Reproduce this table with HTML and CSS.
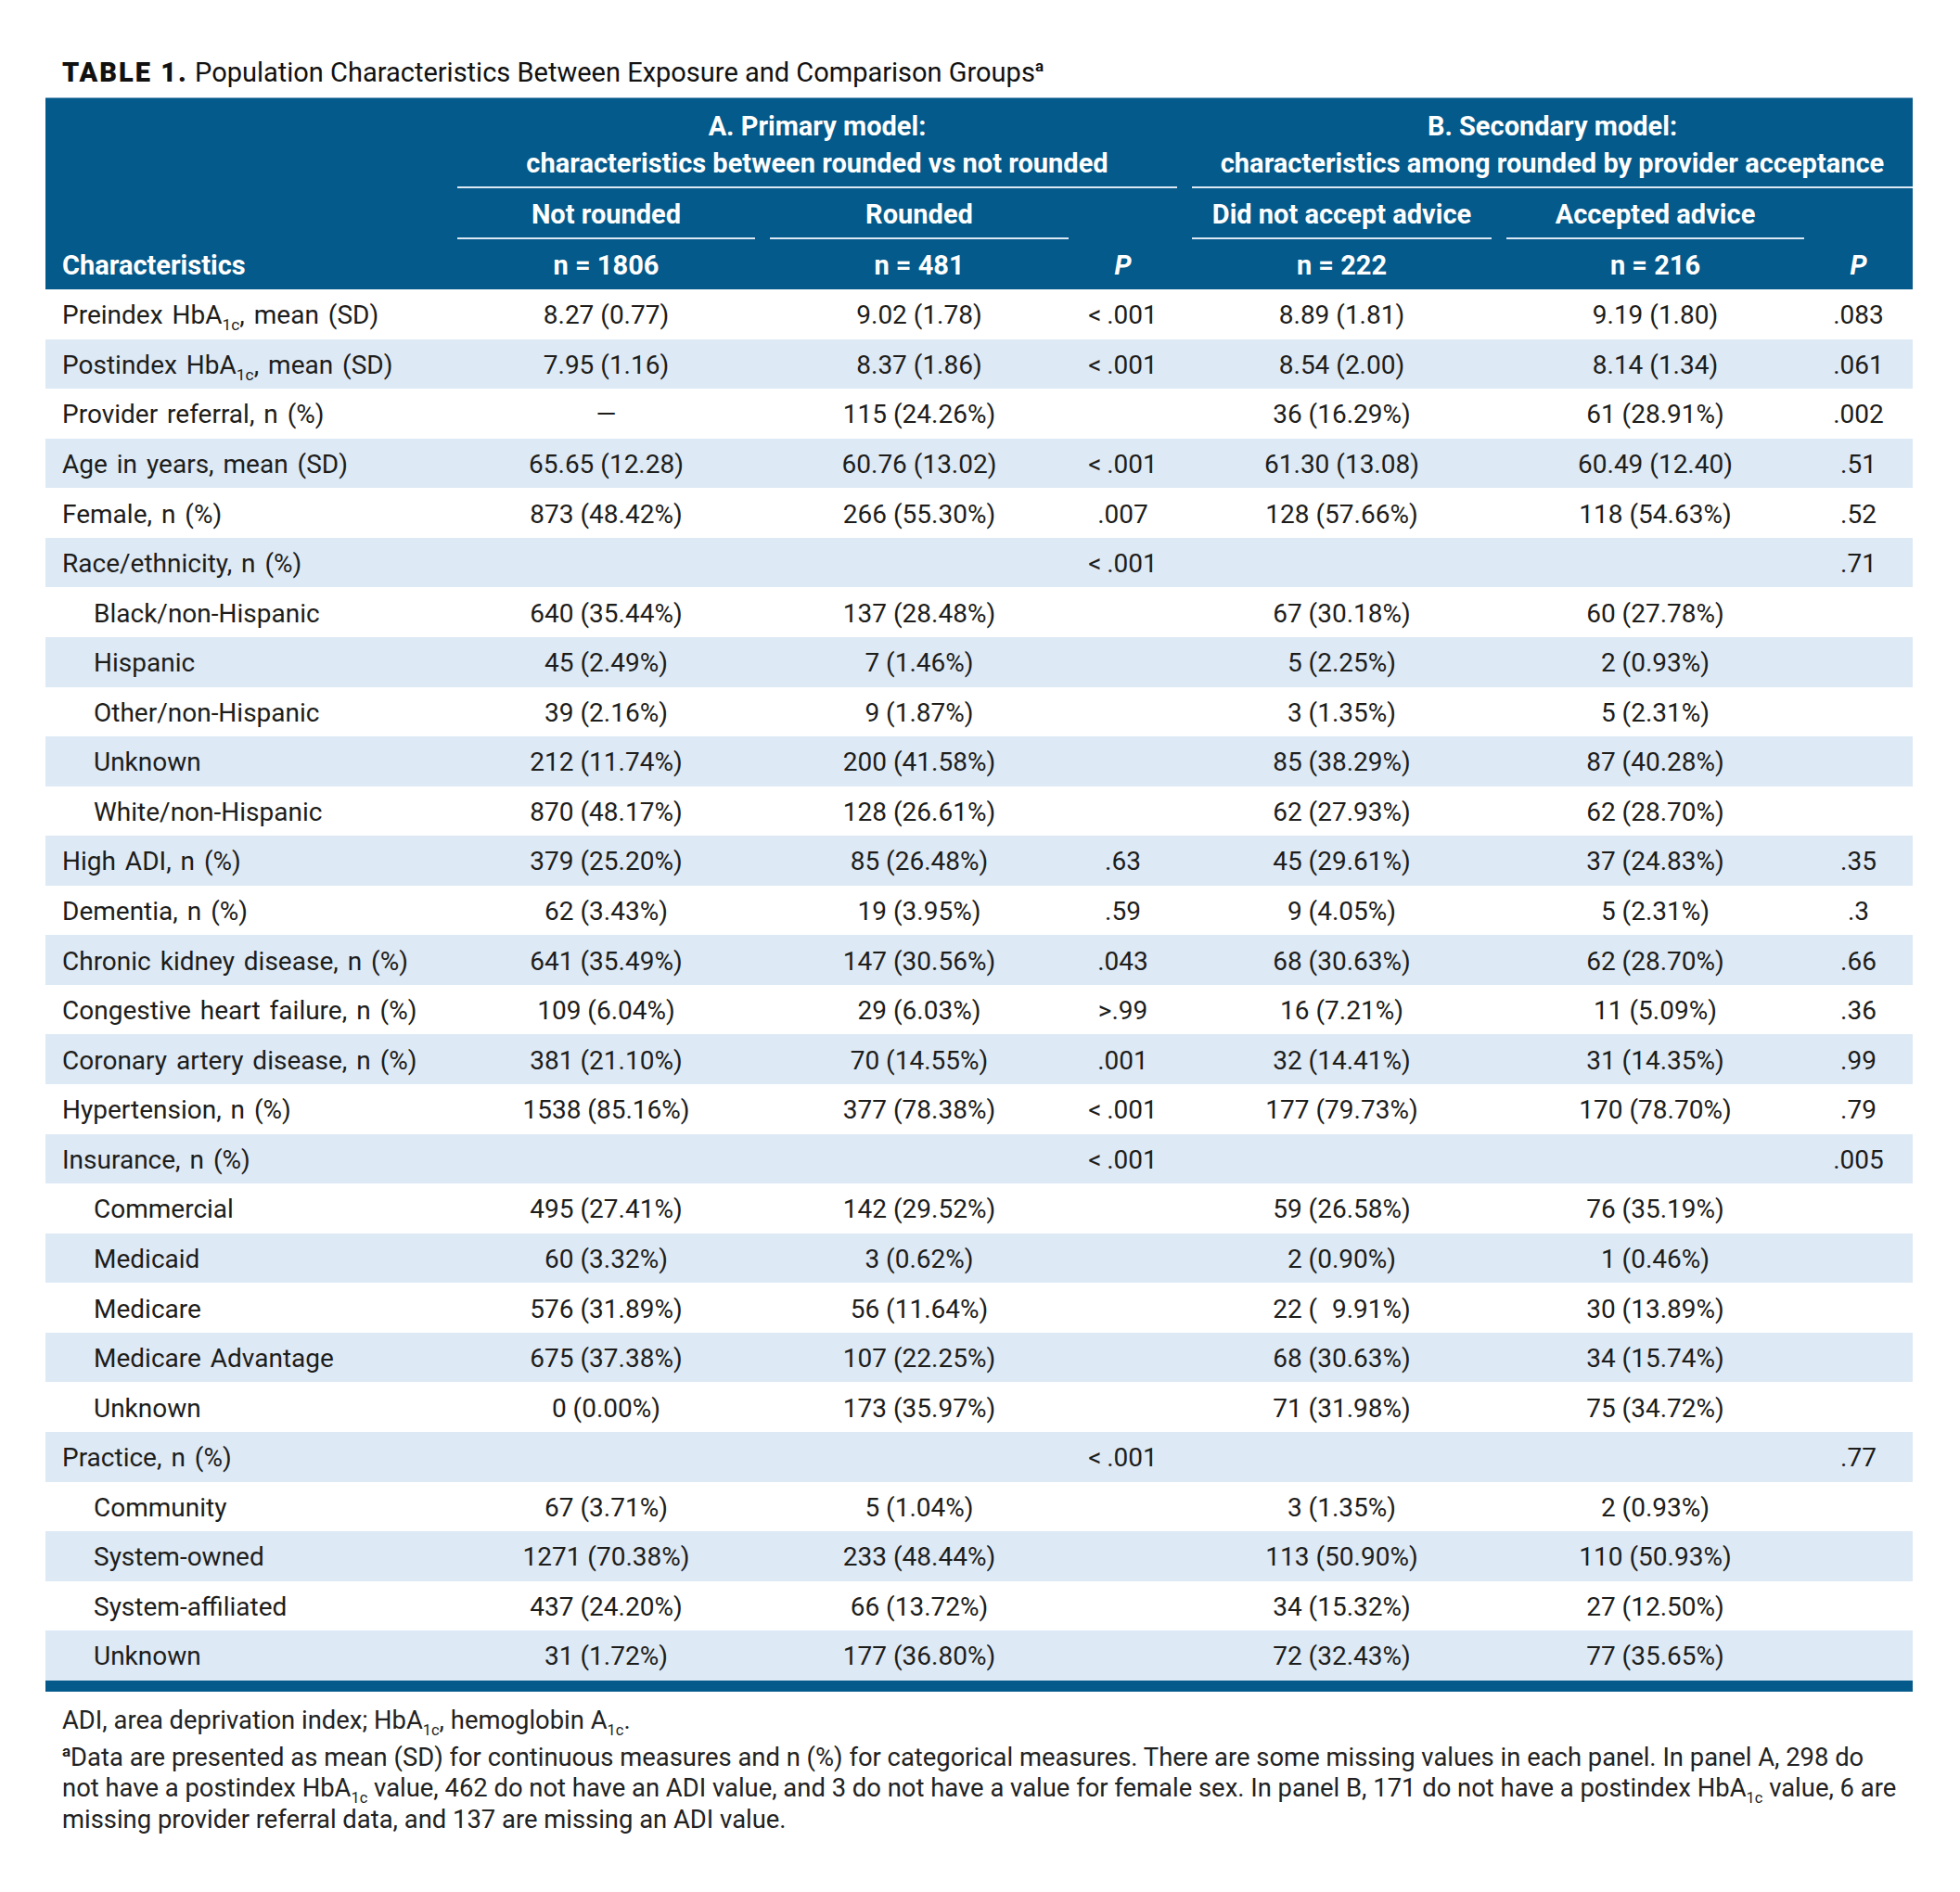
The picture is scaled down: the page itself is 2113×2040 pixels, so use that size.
FILE: index.html
```html
<!DOCTYPE html>
<html lang="en">
<head>
<meta charset="utf-8">
<title>Table 1</title>
<link rel="stylesheet" href="styles.css">
</head>
<body>
<div class="page">
  <h1 class="caption"><span class="cap-label">TABLE 1.</span> Population Characteristics Between Exposure and Comparison Groups<sup class="fn-mark">a</sup></h1>
  <table class="data">
    <colgroup>
      <col class="c0"><col class="c1"><col class="c2"><col class="c3"><col class="c4"><col class="c5"><col class="c6">
    </colgroup>
    <thead>
      <tr class="h-group">
        <th rowspan="2"></th>
        <th colspan="3" class="grp grp-a"><div class="rule">A. Primary model:<br>characteristics between rounded vs not rounded</div></th>
        <th colspan="3" class="grp grp-b"><div class="rule">B. Secondary model:<br>characteristics among rounded by provider acceptance</div></th>
      </tr>
      <tr class="h-sub">
        <th class="sub"><div class="rule">Not rounded</div></th>
        <th class="sub"><div class="rule">Rounded</div></th>
        <th></th>
        <th class="sub"><div class="rule">Did not accept advice</div></th>
        <th class="sub"><div class="rule">Accepted advice</div></th>
        <th></th>
      </tr>
      <tr class="h-n">
        <th class="lbl">Characteristics</th>
        <th>n = 1806</th>
        <th>n = 481</th>
        <th class="p pa"><i>P</i></th>
        <th>n = 222</th>
        <th>n = 216</th>
        <th class="p pb"><i>P</i></th>
      </tr>
    </thead>
    <tbody>
      <tr><td class="lbl">Preindex HbA<sub>1c</sub>, mean (SD)</td><td>8.27 (0.77)</td><td>9.02 (1.78)</td><td class="p pa">&lt;&#8201;.001</td><td>8.89 (1.81)</td><td>9.19 (1.80)</td><td class="p pb">.083</td></tr>
      <tr><td class="lbl">Postindex HbA<sub>1c</sub>, mean (SD)</td><td>7.95 (1.16)</td><td>8.37 (1.86)</td><td class="p pa">&lt;&#8201;.001</td><td>8.54 (2.00)</td><td>8.14 (1.34)</td><td class="p pb">.061</td></tr>
      <tr><td class="lbl">Provider referral, n (%)</td><td>—</td><td>115 (24.26%)</td><td class="p pa"></td><td>36 (16.29%)</td><td>61 (28.91%)</td><td class="p pb">.002</td></tr>
      <tr><td class="lbl">Age in years, mean (SD)</td><td>65.65 (12.28)</td><td>60.76 (13.02)</td><td class="p pa">&lt;&#8201;.001</td><td>61.30 (13.08)</td><td>60.49 (12.40)</td><td class="p pb">.51</td></tr>
      <tr><td class="lbl">Female, n (%)</td><td>873 (48.42%)</td><td>266 (55.30%)</td><td class="p pa">.007</td><td>128 (57.66%)</td><td>118 (54.63%)</td><td class="p pb">.52</td></tr>
      <tr><td class="lbl">Race/ethnicity, n (%)</td><td></td><td></td><td class="p pa">&lt;&#8201;.001</td><td></td><td></td><td class="p pb">.71</td></tr>
      <tr><td class="lbl ind">Black/non-Hispanic</td><td>640 (35.44%)</td><td>137 (28.48%)</td><td class="p pa"></td><td>67 (30.18%)</td><td>60 (27.78%)</td><td class="p pb"></td></tr>
      <tr><td class="lbl ind">Hispanic</td><td>45 (2.49%)</td><td>7 (1.46%)</td><td class="p pa"></td><td>5 (2.25%)</td><td>2 (0.93%)</td><td class="p pb"></td></tr>
      <tr><td class="lbl ind">Other/non-Hispanic</td><td>39 (2.16%)</td><td>9 (1.87%)</td><td class="p pa"></td><td>3 (1.35%)</td><td>5 (2.31%)</td><td class="p pb"></td></tr>
      <tr><td class="lbl ind">Unknown</td><td>212 (11.74%)</td><td>200 (41.58%)</td><td class="p pa"></td><td>85 (38.29%)</td><td>87 (40.28%)</td><td class="p pb"></td></tr>
      <tr><td class="lbl ind">White/non-Hispanic</td><td>870 (48.17%)</td><td>128 (26.61%)</td><td class="p pa"></td><td>62 (27.93%)</td><td>62 (28.70%)</td><td class="p pb"></td></tr>
      <tr><td class="lbl">High ADI, n (%)</td><td>379 (25.20%)</td><td>85 (26.48%)</td><td class="p pa">.63</td><td>45 (29.61%)</td><td>37 (24.83%)</td><td class="p pb">.35</td></tr>
      <tr><td class="lbl">Dementia, n (%)</td><td>62 (3.43%)</td><td>19 (3.95%)</td><td class="p pa">.59</td><td>9 (4.05%)</td><td>5 (2.31%)</td><td class="p pb">.3</td></tr>
      <tr><td class="lbl">Chronic kidney disease, n (%)</td><td>641 (35.49%)</td><td>147 (30.56%)</td><td class="p pa">.043</td><td>68 (30.63%)</td><td>62 (28.70%)</td><td class="p pb">.66</td></tr>
      <tr><td class="lbl">Congestive heart failure, n (%)</td><td>109 (6.04%)</td><td>29 (6.03%)</td><td class="p pa">&gt;.99</td><td>16 (7.21%)</td><td>11 (5.09%)</td><td class="p pb">.36</td></tr>
      <tr><td class="lbl">Coronary artery disease, n (%)</td><td>381 (21.10%)</td><td>70 (14.55%)</td><td class="p pa">.001</td><td>32 (14.41%)</td><td>31 (14.35%)</td><td class="p pb">.99</td></tr>
      <tr><td class="lbl">Hypertension, n (%)</td><td>1538 (85.16%)</td><td>377 (78.38%)</td><td class="p pa">&lt;&#8201;.001</td><td>177 (79.73%)</td><td>170 (78.70%)</td><td class="p pb">.79</td></tr>
      <tr><td class="lbl">Insurance, n (%)</td><td></td><td></td><td class="p pa">&lt;&#8201;.001</td><td></td><td></td><td class="p pb">.005</td></tr>
      <tr><td class="lbl ind">Commercial</td><td>495 (27.41%)</td><td>142 (29.52%)</td><td class="p pa"></td><td>59 (26.58%)</td><td>76 (35.19%)</td><td class="p pb"></td></tr>
      <tr><td class="lbl ind">Medicaid</td><td>60 (3.32%)</td><td>3 (0.62%)</td><td class="p pa"></td><td>2 (0.90%)</td><td>1 (0.46%)</td><td class="p pb"></td></tr>
      <tr><td class="lbl ind">Medicare</td><td>576 (31.89%)</td><td>56 (11.64%)</td><td class="p pa"></td><td>22 (&#8199;9.91%)</td><td>30 (13.89%)</td><td class="p pb"></td></tr>
      <tr><td class="lbl ind">Medicare Advantage</td><td>675 (37.38%)</td><td>107 (22.25%)</td><td class="p pa"></td><td>68 (30.63%)</td><td>34 (15.74%)</td><td class="p pb"></td></tr>
      <tr><td class="lbl ind">Unknown</td><td>0 (0.00%)</td><td>173 (35.97%)</td><td class="p pa"></td><td>71 (31.98%)</td><td>75 (34.72%)</td><td class="p pb"></td></tr>
      <tr><td class="lbl">Practice, n (%)</td><td></td><td></td><td class="p pa">&lt;&#8201;.001</td><td></td><td></td><td class="p pb">.77</td></tr>
      <tr><td class="lbl ind">Community</td><td>67 (3.71%)</td><td>5 (1.04%)</td><td class="p pa"></td><td>3 (1.35%)</td><td>2 (0.93%)</td><td class="p pb"></td></tr>
      <tr><td class="lbl ind">System-owned</td><td>1271 (70.38%)</td><td>233 (48.44%)</td><td class="p pa"></td><td>113 (50.90%)</td><td>110 (50.93%)</td><td class="p pb"></td></tr>
      <tr><td class="lbl ind">System-affiliated</td><td>437 (24.20%)</td><td>66 (13.72%)</td><td class="p pa"></td><td>34 (15.32%)</td><td>27 (12.50%)</td><td class="p pb"></td></tr>
      <tr><td class="lbl ind">Unknown</td><td>31 (1.72%)</td><td>177 (36.80%)</td><td class="p pa"></td><td>72 (32.43%)</td><td>77 (35.65%)</td><td class="p pb"></td></tr>
    </tbody>
  </table>
  <div class="bar"></div>
  <div class="notes">
    <p class="abbr">ADI, area deprivation index; HbA<sub>1c</sub>, hemoglobin A<sub>1c</sub>.</p>
    <p class="fn"><sup class="fn-a">a</sup>Data are presented as mean (SD) for continuous measures and n (%) for categorical measures. There are some missing values in each panel. In panel A, 298 do<br>not have a postindex HbA<sub>1c</sub> value, 462 do not have an ADI value, and 3 do not have a value for female sex. In panel B, 171 do not have a postindex HbA<sub>1c</sub> value, 6 are<br>missing provider referral data, and 137 are missing an ADI value.</p>
  </div>
</div>
</body>
</html>
```
FILE: styles.css
```css
html, body {
  margin: 0;
  padding: 0;
  background: #ffffff;
}

.page {
  padding: 58px 0 0 49px;
  width: 2013px;
  font-family: Roboto, "Liberation Sans", sans-serif;
  color: #1d1d1b;
}

.caption {
  margin: 0 0 7px 0;
  padding-left: 18px;
  font-size: 29px;
  line-height: 40px;
  font-weight: 400;
  color: #111111;
}

.cap-label {
  font-weight: 900;
  letter-spacing: 2px;
}

.fn-mark {
  font-size: 17px;
  font-weight: 700;
  vertical-align: 11px;
  line-height: 0;
}

.data {
  width: 2013px;
  border-collapse: collapse;
  table-layout: fixed;
  font-size: 28px;
}

.c0 { width: 436px; }
.c1 { width: 337px; }
.c2 { width: 338px; }
.c3 { width: 117px; }
.c4 { width: 339px; }
.c5 { width: 337px; }
.c6 { width: 109px; }

thead {
  background: #035a8b;
  color: #ffffff;
}

thead tr.h-group {
  border-top: 1px solid #7fa6c6;
}

thead th {
  font-weight: 700;
  font-size: 29px;
  padding: 0;
  text-align: center;
  line-height: 40px;
  vertical-align: bottom;
}

.rule {
  border-bottom: 2px solid #dce8f4;
}

.grp {
  padding-top: 10px;
}

.grp-a .rule {
  margin: 0 8px;
  padding-bottom: 5px;
}

.grp-b .rule {
  margin: 0 0 0 8px;
  padding-bottom: 5px;
}

.h-sub th {
  padding-top: 8px;
  height: 55px;
  box-sizing: border-box;
}

.sub .rule {
  margin: 0 8px;
  padding-bottom: 5px;
}

.h-n th {
  height: 54px;
  padding-top: 8px;
  padding-bottom: 6px;
  box-sizing: border-box;
}

th.lbl {
  text-align: left;
  padding-left: 18px;
}

tbody td {
  height: 53.57px;
  padding: 3px 0 0 0;
  box-sizing: border-box;
  text-align: center;
  vertical-align: middle;
  line-height: 40px;
  white-space: nowrap;
}

tbody tr:nth-child(even) {
  background: #dde9f5;
}

td.lbl {
  text-align: left;
  padding-left: 18px;
  word-spacing: 3px;
}

td.ind {
  padding-left: 52px;
}

.p.pa {
  padding-right: 16px;
}

.p.pb {
  padding-right: 8px;
}

sub {
  font-size: 62%;
  vertical-align: -7px;
  line-height: 0;
}

.bar {
  height: 12px;
  background: #035a8b;
}

.notes {
  padding: 14px 0 0 18px;
  font-size: 27.4px;
  color: #222222;
}

.notes p {
  margin: 0;
  white-space: nowrap;
}

.abbr {
  line-height: 34px;
  margin-bottom: 7px !important;
}

.fn {
  line-height: 33.5px;
}

.notes sub {
  font-size: 60%;
  vertical-align: -7px;
}

.fn-a {
  font-size: 17px;
  font-weight: 700;
  vertical-align: 10px;
  line-height: 0;
}
```
